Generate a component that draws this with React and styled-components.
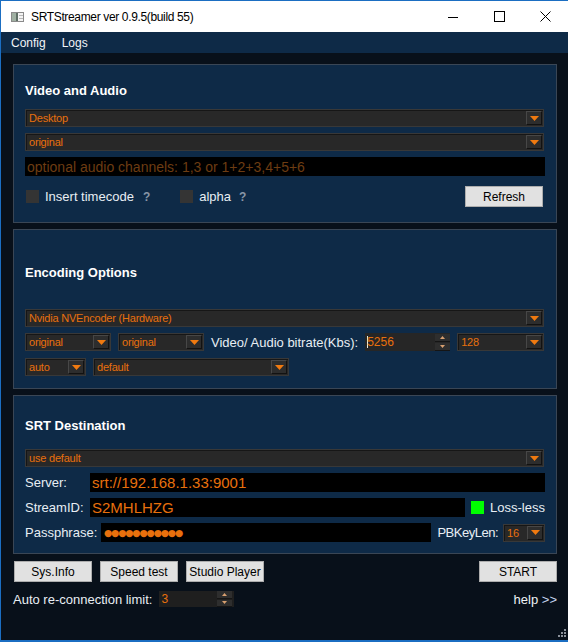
import React from 'react';
import styled, { createGlobalStyle } from 'styled-components';

const GlobalStyle = createGlobalStyle`
  html, body { margin: 0; padding: 0; background: #08101a; }
  body { font-family: "Liberation Sans", Arial, sans-serif; overflow: hidden; }
  * { box-sizing: border-box; }
`;

const ORANGE = '#e8700d';

const Window = styled.div`
  position: relative;
  width: 568px;
  height: 642px;
  border-left: 1px solid #1b6ec2;
  border-top: 1px solid #1b6ec2;
  border-bottom: 2px solid #1b6ec2;
  display: flex;
  flex-direction: column;
  background: #08101a;
`;

const TitleBar = styled.div`
  height: 31px;
  flex-shrink: 0;
  background: #ffffff;
  display: flex;
  align-items: center;
`;

const AppIcon = styled.svg`
  margin: 0 7px 0 10px;
  flex-shrink: 0;
`;

const TitleText = styled.span`
  flex: 1;
  font-size: 12px;
  letter-spacing: -0.35px;
  color: #000;
`;

const Caption = styled.div`
  width: 46px;
  height: 31px;
  display: flex;
  align-items: center;
  justify-content: center;
`;

const MenuBar = styled.div`
  height: 21px;
  flex-shrink: 0;
  background: #0e2a47;
  display: flex;
  align-items: center;
  gap: 16px;
  padding-left: 10px;
`;

const MenuItem = styled.span`
  font-size: 12px;
  color: #f2f4f7;
`;

const Body = styled.div`
  flex: 1;
  display: flex;
  flex-direction: column;
  padding: 11px 11px 0 12px;
`;

const Panel = styled.section`
  height: ${p => p.$h}px;
  border: 1px solid #3a4655;
  background: #0e2a47;
  padding: ${p => p.$pt}px 11px 0 11px;
  display: flex;
  flex-direction: column;
  & + & { margin-top: 6px; }
`;

const Heading = styled.h2`
  margin: 0;
  font-size: 13px;
  line-height: 17px;
  font-weight: bold;
  color: #ffffff;
`;

const Row = styled.div`
  display: flex;
  align-items: center;
  gap: ${p => p.$gap ?? 7}px;
  margin-top: ${p => p.$mt ?? 0}px;
  height: ${p => p.$h ?? 18}px;
`;

const Combo = styled.div`
  height: 18px;
  width: ${p => (p.$w ? `${p.$w}px` : 'auto')};
  flex: ${p => (p.$w ? 'none' : '1')};
  margin-right: ${p => p.$mr ?? 0}px;
  background: #282828;
  border: 1px solid #383838;
  box-shadow: inset 1px 1px 0 #161616;
  display: flex;
  align-items: center;
  padding-left: 3px;
  color: ${ORANGE};
  font-size: 11px;
  letter-spacing: -0.2px;
  white-space: nowrap;
`;

const DropBtn = styled.span`
  margin-left: auto;
  margin-right: 1px;
  width: 16px;
  height: 14px;
  flex-shrink: 0;
  background: #2d2d2d;
  border: 1px solid;
  border-color: #474747 #121212 #121212 #474747;
  display: flex;
  align-items: center;
  justify-content: center;
`;

const Arrow = () => (
  <svg width="9" height="5" viewBox="0 0 9 5">
    <polygon points="0,0 9,0 4.5,5" fill="#f07a10" />
  </svg>
);

const Select = ({ children, w, mr }) => (
  <Combo $w={w} $mr={mr}>
    {children}
    <DropBtn><Arrow /></DropBtn>
  </Combo>
);

const Field = styled.div`
  height: ${p => p.$h ?? 19}px;
  flex: ${p => (p.$w ? 'none' : '1')};
  width: ${p => (p.$w ? `${p.$w}px` : 'auto')};
  background: #000;
  display: flex;
  align-items: center;
  padding-left: ${p => p.$pl ?? 2}px;
  color: ${p => p.$color ?? ORANGE};
  font-size: ${p => p.$fs ?? 15}px;
  white-space: nowrap;
  overflow: hidden;
`;

const Dots = styled.span`
  font-family: "DejaVu Sans", sans-serif;
  font-size: 9.5px;
  letter-spacing: -1.2px;
  color: ${ORANGE};
`;

const Label = styled.span`
  font-size: 13px;
  color: #e8eef4;
  white-space: nowrap;
  width: ${p => (p.$w ? `${p.$w}px` : 'auto')};
  margin-left: ${p => p.$ml ?? 0}px;
  margin-right: ${p => p.$mr ?? 0}px;
  letter-spacing: ${p => p.$ls ?? 0}px;
  flex-shrink: 0;
`;

const Check = styled.span`
  width: 13px;
  height: 13px;
  flex-shrink: 0;
  background: #343434;
  margin-left: ${p => p.$ml ?? 0}px;
`;

const Hint = styled.span`
  font-size: 12px;
  font-weight: bold;
  color: #8896a6;
  margin-left: ${p => p.$ml ?? 0}px;
`;

const Button = styled.button`
  width: ${p => p.$w ?? 78}px;
  height: 21px;
  flex-shrink: 0;
  margin-left: ${p => (p.$push ? 'auto' : '0')};
  margin-right: ${p => p.$mr ?? 0}px;
  background: #e1e1e1;
  border: 1px solid #adadad;
  padding: 0;
  font-family: "Liberation Sans", Arial, sans-serif;
  font-size: 12px;
  color: #000;
`;

const Spin = styled.div`
  height: ${p => p.$h}px;
  width: ${p => p.$w}px;
  flex-shrink: 0;
  background: ${p => p.$bg ?? '#262626'};
  display: flex;
  align-items: center;
  padding-left: 2px;
  color: ${ORANGE};
  font-size: 12px;
`;

const Caret = styled.span`
  width: 1px;
  height: 12px;
  background: #e8e8e8;
  margin-right: -1px;
`;

const SpinArrows = styled.span`
  margin-left: auto;
  margin-right: ${p => p.$mr ?? 0}px;
  width: 15px;
  height: 100%;
  display: flex;
  flex-direction: column;
  justify-content: center;
  gap: 1px;
`;

const SpinBtn = styled.span`
  flex: 1;
  max-height: 8px;
  background: #2e2e2e;
  border-bottom: 1px solid #151515;
  display: flex;
  align-items: center;
  justify-content: center;
`;

const Tiny = ({ up }) => (
  <svg width="5" height="3" viewBox="0 0 5 3">
    <polygon points={up ? '0,3 5,3 2.5,0' : '0,0 5,0 2.5,3'} fill="#d9a070" />
  </svg>
);

const Green = styled.span`
  width: 13px;
  height: 13px;
  margin-left: 6px;
  background: #00ff00;
  flex-shrink: 0;
`;

const Footer = styled.div`
  display: flex;
  align-items: center;
  gap: ${p => p.$gap ?? 8}px;
  margin-top: ${p => p.$mt}px;
  height: ${p => p.$h}px;
  padding-left: ${p => p.$pl ?? 0}px;
`;

const Help = styled.span`
  margin-left: auto;
  font-size: 13px;
  color: #eef2f6;
  & b { font-weight: normal; color: #c6d6f2; }
`;

const Grip = styled.svg`
  position: absolute;
  right: 2px;
  bottom: 3px;
`;

export default function App() {
  return (
    <>
      <GlobalStyle />
      <Window>
        <TitleBar>
          <AppIcon width="13" height="10" viewBox="0 0 13 10">
            <rect x="0.5" y="0.5" width="12" height="9" fill="#f4f4f4" stroke="#8a8a8a" />
            <rect x="1" y="1" width="4" height="8" fill="#9fb0a2" />
            <rect x="5" y="1" width="2" height="8" fill="#5f6f66" />
            <rect x="8" y="3" width="4" height="1" fill="#b8b8b8" />
            <rect x="8" y="6" width="4" height="1" fill="#b8b8b8" />
          </AppIcon>
          <TitleText>SRTStreamer ver 0.9.5(build 55)</TitleText>
          <Caption>
            <svg width="10" height="10" viewBox="0 0 10 10">
              <line x1="0" y1="5.5" x2="10" y2="5.5" stroke="#000" strokeWidth="1" />
            </svg>
          </Caption>
          <Caption>
            <svg width="11" height="11" viewBox="0 0 11 11">
              <rect x="0.5" y="0.5" width="10" height="10" fill="none" stroke="#000" strokeWidth="1" />
            </svg>
          </Caption>
          <Caption>
            <svg width="11" height="11" viewBox="0 0 11 11">
              <path d="M0.5 0.5 L10.5 10.5 M10.5 0.5 L0.5 10.5" stroke="#000" strokeWidth="1" />
            </svg>
          </Caption>
        </TitleBar>

        <MenuBar>
          <MenuItem>Config</MenuItem>
          <MenuItem>Logs</MenuItem>
        </MenuBar>

        <Body>
          <Panel $h={159} $pt={17}>
            <Heading>Video and Audio</Heading>
            <Row $mt={10}><Select mr={1}>Desktop</Select></Row>
            <Row $mt={6}><Select mr={1}>original</Select></Row>
            <Row $mt={6} $h={19}>
              <Field $fs={14} $color="#6d3c12">optional audio channels: 1,3 or 1+2+3,4+5+6</Field>
            </Row>
            <Row $mt={10} $h={21} $gap={0}>
              <Check $ml={1} />
              <Label $ml={6}>Insert timecode</Label>
              <Hint $ml={9}>?</Hint>
              <Check $ml={30} />
              <Label $ml={6}>alpha</Label>
              <Hint $ml={8}>?</Hint>
              <Button $push $mr={2}>Refresh</Button>
            </Row>
          </Panel>

          <Panel $h={160} $pt={34}>
            <Heading>Encoding Options</Heading>
            <Row $mt={28}><Select mr={1}>Nvidia NVEncoder (Hardware)</Select></Row>
            <Row $mt={6}>
              <Select w={86}>original</Select>
              <Select w={86}>original</Select>
              <Label>Video/ Audio bitrate(Kbs):</Label>
              <Spin $w={85} $h={18}>
                <Caret />5256
                <SpinArrows>
                  <SpinBtn><Tiny up /></SpinBtn>
                  <SpinBtn><Tiny /></SpinBtn>
                </SpinArrows>
              </Spin>
              <Select w={87}>128</Select>
            </Row>
            <Row $mt={7}>
              <Select w={61}>auto</Select>
              <Select w={196}>default</Select>
            </Row>
          </Panel>

          <Panel $h={159} $pt={21}>
            <Heading>SRT Destination</Heading>
            <Row $mt={15}><Select mr={1}>use default</Select></Row>
            <Row $mt={6} $h={19} $gap={0}>
              <Label $w={65}>Server:</Label>
              <Field>srt://192.168.1.33:9001</Field>
            </Row>
            <Row $mt={5} $h={20} $gap={0}>
              <Label $w={65}>StreamID:</Label>
              <Field>S2MHLHZG</Field>
              <Green />
              <Label $ml={6}>Loss-less</Label>
            </Row>
            <Row $mt={6} $h={19} $gap={0}>
              <Label $w={76}>Passphrase:</Label>
              <Field $pl={3}><Dots>●●●●●●●●●●●</Dots></Field>
              <Label $ml={6} $mr={5} $ls={-0.5}>PBKeyLen:</Label>
              <Select w={42}>16</Select>
            </Row>
          </Panel>

          <Footer $mt={7} $h={21} $pl={1}>
            <Button>Sys.Info</Button>
            <Button>Speed test</Button>
            <Button>Studio Player</Button>
            <Button $push>START</Button>
          </Footer>

          <Footer $mt={9} $h={16} $gap={7}>
            <Label>Auto re-connection limit:</Label>
            <Spin $w={75} $h={16} $bg="#1f1f1f">
              3
              <SpinArrows $mr={2}>
                <SpinBtn><Tiny up /></SpinBtn>
                <SpinBtn><Tiny /></SpinBtn>
              </SpinArrows>
            </Spin>
            <Help>help <b>&gt;&gt;</b></Help>
          </Footer>
        </Body>

        <Grip width="8" height="8" viewBox="0 0 8 8">
          <rect x="6" y="0" width="2" height="2" fill="#8a9099" />
          <rect x="3" y="3" width="2" height="2" fill="#8a9099" />
          <rect x="6" y="3" width="2" height="2" fill="#8a9099" />
          <rect x="0" y="6" width="2" height="2" fill="#8a9099" />
          <rect x="3" y="6" width="2" height="2" fill="#8a9099" />
          <rect x="6" y="6" width="2" height="2" fill="#8a9099" />
        </Grip>
      </Window>
    </>
  );
}
